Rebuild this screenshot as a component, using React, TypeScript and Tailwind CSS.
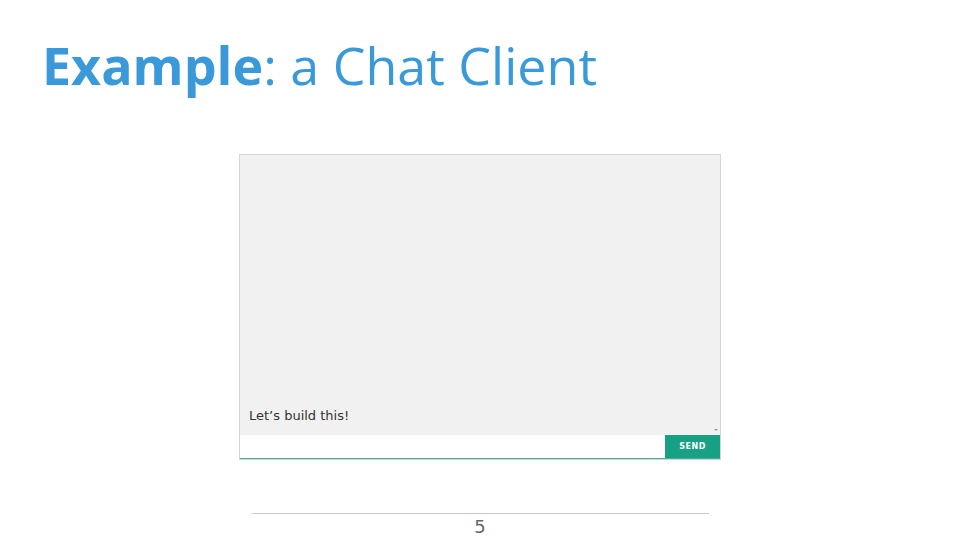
export default function App() {
  return (
    <div className="flex h-[540px] w-[960px] flex-col bg-white font-['Open_Sans',sans-serif]">
      <h1 className="pl-[42px] pt-[25px] text-[52px] leading-[80px] text-[#3a9ad9]">
        <span className="font-bold">Example</span>
        <span className="font-normal">: a Chat Client</span>
      </h1>

      <div className="ml-[239px] mt-[49px] flex h-[307px] w-[482px] flex-col border border-[#d4d4d4] font-['Verdana','DejaVu_Sans',sans-serif]">
        <div className="relative flex flex-1 flex-col justify-end bg-[#f1f1f1] px-[9px] pb-[11px]">
          <p className="text-[13px] leading-[16px] text-[#333]">Let’s build this!</p>
          <span className="absolute bottom-[4px] right-[2px] h-0 w-0 border-x-[2px] border-t-[2px] border-x-transparent border-t-[#999]" />
        </div>
        <div className="flex h-[24px] border-b border-[#3fb59d] bg-white">
          <input className="flex-1 bg-white outline-none" />
          <button className="w-[55px] bg-[#17a083] text-[8px] font-bold tracking-[0.5px] text-white">
            SEND
          </button>
        </div>
      </div>

      <div className="mx-auto mt-[53px] w-[457px] border-t border-[#c8c8c8] text-center text-[18px] leading-[26px] text-[#666] font-['DejaVu_Sans',sans-serif]">
        5
      </div>
    </div>
  );
}
